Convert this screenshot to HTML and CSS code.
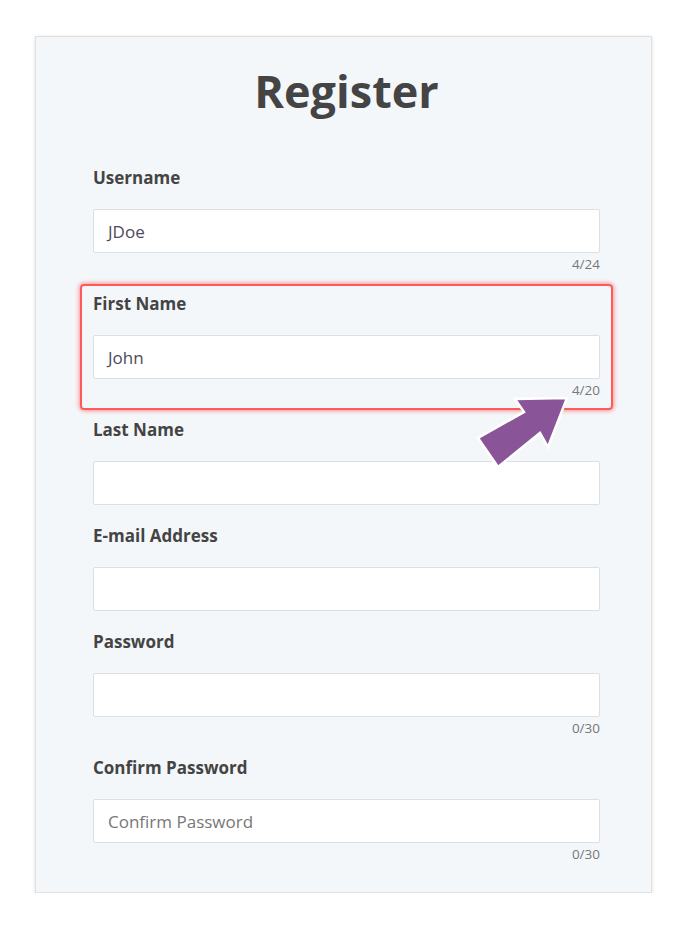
FILE: index.html
```html
<!DOCTYPE html>
<html>
<head>
<meta charset="utf-8">
<link rel="stylesheet" href="styles.css">
</head>
<body>
<div class="card">
  <h1 class="title">Register</h1>
  <form class="form">
    <div class="group">
      <label class="label">Username</label>
      <div class="input">JDoe</div>
      <div class="counter">4/24</div>
    </div>
    <div class="group highlighted">
      <div class="highlight"></div>
      <label class="label">First Name</label>
      <div class="input">John</div>
      <div class="counter">4/20</div>
      <svg class="arrow" width="110" height="90" viewBox="470 385 110 90">
        <polygon points="567,398 515,399 524,412 478,438 498,467 540,433 548,447" fill="#8a5598" stroke="#ffffff" stroke-width="2.5" stroke-linejoin="miter"/>
      </svg>
    </div>
    <div class="group">
      <label class="label">Last Name</label>
      <div class="input"></div>
    </div>
    <div class="group">
      <label class="label">E-mail Address</label>
      <div class="input"></div>
    </div>
    <div class="group">
      <label class="label">Password</label>
      <div class="input"></div>
      <div class="counter">0/30</div>
    </div>
    <div class="group">
      <label class="label">Confirm Password</label>
      <div class="input placeholder">Confirm Password</div>
      <div class="counter">0/30</div>
    </div>
  </form>
</div>
</body>
</html>
```
FILE: styles.css
```css
* { box-sizing: border-box; }
html, body { margin: 0; padding: 0; background: #ffffff; }
body {
  padding: 36px 35px 0 35px;
  font-family: "Open Sans", "Liberation Sans", sans-serif;
  color: #444;
}
.card {
  width: 617px;
  height: 857px;
  background: #f4f7fa;
  border: 1px solid #e0e0e0;
  box-shadow: 0 1px 4px rgba(0,0,0,0.12);
  padding: 26px 51px 0 57px;
}
.title {
  margin: 0;
  text-align: center;
  font-size: 45px;
  font-weight: 700;
  color: #444;
  line-height: 56px;
}
.form {
  margin-top: 48px;
  display: flex;
  flex-direction: column;
}
.group {
  position: relative;
  display: flex;
  flex-direction: column;
  margin-bottom: 20px;
}
.group.highlighted { z-index: 2; }
.label {
  display: block;
  font-size: 17px;
  font-weight: 700;
  color: #444;
  line-height: 22px;
  margin-bottom: 20px;
}
.input {
  height: 44px;
  background: #fff;
  border: 1px solid #dcdfe3;
  border-radius: 2px;
  padding: 0 14px;
  display: flex;
  align-items: center;
  font-size: 17px;
  color: #4c4a5a;
}
.input.placeholder { color: #777; }
.counter {
  height: 20px;
  line-height: 20px;
  text-align: right;
  font-size: 13.5px;
  color: #777;
  padding-top: 1px;
}
.highlight {
  position: absolute;
  top: -9px;
  bottom: -11px;
  left: -13px;
  right: -13px;
  border: 2px solid #ff5a5a;
  border-radius: 4px;
  box-shadow: 0 0 4px 1px rgba(255,80,80,0.6);
  pointer-events: none;
}
.arrow {
  position: absolute;
  left: 377px;
  top: 92px;
  overflow: visible;
}
```
